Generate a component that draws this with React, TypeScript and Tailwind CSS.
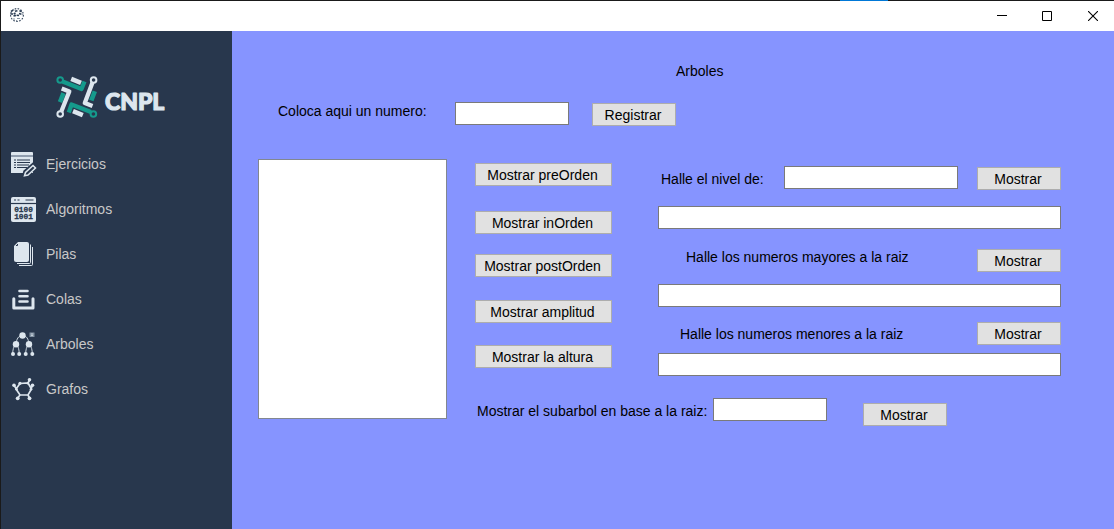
import React from 'react';

const LIGHT = '#dde6ee';
const NAVY = '#28374d';
const TEAL = '#159a8c';

function AppIcon() {
  return (
    <svg width="16" height="16" viewBox="0 0 16 16" fill="none" aria-hidden="true">
      <circle cx="8" cy="8" r="6.4" stroke="#35475c" strokeWidth="1.1" strokeDasharray="1.6 1.4" />
      <path d="M2 4.500 5 2.500M1.500 7h3l2-1M4.500 9l3-.8 3 .4M10.500 3.500l2.500 1.500M10 6.500l3.500 1M6 4.300l2.500-.6" stroke="#2c3e55" strokeWidth="1.600" strokeDasharray="2.500 .7" />
      <path d="M4 12h2M8 11.500h3M7 13.500h1" stroke="#8a97a5" />
    </svg>
  );
}

function Logo() {
  return (
    <svg className="ml-[54px]" width="112" height="46" viewBox="0 0 112 46" role="img" aria-label="CNPL">
      <g fill="none" strokeWidth="4.300" strokeLinejoin="round">
        <g stroke={TEAL}>
          <path d="M7.500 7.500 26.500 15 29.500 7.500" />
          <circle cx="5.200" cy="6" r="2.800" strokeWidth="2" />
          <path d="M8.500 19.200 5 28.200" strokeWidth="4.600" />
          <path d="M36 38 16.500 30.500 13.800 38.500" />
          <circle cx="38.400" cy="40" r="2.800" strokeWidth="2" />
          <path d="M39.800 17.200 36.300 26.500" strokeWidth="4.600" />
        </g>
        <g stroke={LIGHT}>
          <path d="M37.500 8.500 29.800 29 37.500 32" />
          <circle cx="38.600" cy="6" r="2.800" strokeWidth="2" />
          <path d="M16.200 4.800 26 8.800" strokeWidth="4.600" />
          <path d="M6.300 37.500 14.300 17.500 6.700 14.500" />
          <circle cx="5.200" cy="40" r="2.800" strokeWidth="2" />
          <path d="M18 37.200 27.800 41.200" strokeWidth="4.600" />
        </g>
      </g>
      <text x="50" y="36" fill={LIGHT} stroke={LIGHT} strokeWidth="1.200" strokeLinejoin="round" fontFamily="Lato, sans-serif" fontWeight="900" fontSize="23">CNPL</text>
    </svg>
  );
}

function EjerciciosIcon() {
  return (
    <svg width="26" height="26" viewBox="0 0 26 26" aria-hidden="true">
      <path fill={LIGHT} d="M1 1h20a1 1 0 0 1 1 1v20H0V2a1 1 0 0 1 1-1Z" />
      <path stroke="#8795a6" strokeWidth="1.800" d="M0 5h22" />
      <path stroke={NAVY} strokeWidth="1.100" d="M3 9h2M6 9h13M3 11.500h2M6 11.500h13M3 14h2M6 14h12M3 16.500h2M6 16.500h10" />
      <path fill={LIGHT} stroke={NAVY} strokeWidth="2.600" d="m12.500 25 1-4.500 8.500-7.500 3 3-8.500 8Z" />
      <path fill={NAVY} stroke={LIGHT} strokeWidth="1.500" d="m13.500 24.800 1-3.300 7.500-7 2.500 2.500-7.500 7Z" />
    </svg>
  );
}

function AlgoritmosIcon() {
  return (
    <svg width="26" height="26" viewBox="0 0 26 26" aria-hidden="true">
      <rect width="25" height="25" y="1" rx="2" fill={LIGHT} />
      <path stroke={NAVY} strokeWidth="1.200" d="M3 4h2M6.500 4h2M14.500 4h8" />
      <path stroke={NAVY} strokeWidth="1.200" d="M0 7.500h25" />
      <g fill={NAVY} stroke={NAVY} strokeWidth=".3" fontFamily="'Liberation Mono', monospace" fontWeight="700" fontSize="7.800">
        <text x="3.200" y="16.300">0100</text>
        <text x="3.200" y="23">1001</text>
      </g>
    </svg>
  );
}

function PilasIcon() {
  return (
    <svg width="26" height="26" viewBox="0 0 26 26" fill={LIGHT} aria-hidden="true">
      <path fill="none" stroke={LIGHT} d="M21.500 6v17.500a1 1 0 0 1-1 1H8M19.500 3.500V21.500a1 1 0 0 1-1 1H6" />
      <path d="M7 1h9a2 2 0 0 1 2 2v16a2 2 0 0 1-2 2H5a2 2 0 0 1-2-2V5Z" />
      <path d="M5 4.500h1.500V3" fill="none" stroke={NAVY} strokeWidth="1" />
    </svg>
  );
}

function ColasIcon() {
  return (
    <svg width="26" height="26" viewBox="0 0 26 26" fill="none" stroke={LIGHT} aria-hidden="true">
      <path strokeWidth="2.600" strokeLinecap="round" d="M8.500 5h8M8.500 10.200h8M8.500 15.500h8" />
      <path strokeWidth="3" strokeLinejoin="round" strokeLinecap="round" d="M2.800 12.800V22H22v-9.200" />
    </svg>
  );
}

function ArbolesIcon() {
  return (
    <svg width="26" height="26" viewBox="0 0 26 26" fill={LIGHT} aria-hidden="true">
      <path fill="none" stroke={LIGHT} strokeWidth=".9" d="M11.500 4.500C7.500 4.500 5.500 8 5 13M11.500 4.500c4 0 6 3.500 6.500 8.500M5 13.500C2.500 15 1.700 19 1.700 23M5 13.500c2.500 1.500 3.200 5.500 3.200 9.500M18 13.500c-2.500 1.500-3.300 5.500-3.300 9.500M18 13.500c2.500 1.500 3.300 5.500 3.300 9.500" />
      <circle cx="11.500" cy="4.500" r="3.200" />
      <circle cx="5" cy="13.300" r="3.200" />
      <circle cx="18" cy="13.300" r="3.200" />
      <circle cx="2" cy="23" r="2" />
      <circle cx="8.200" cy="23" r="2" />
      <circle cx="14.700" cy="23" r="2" />
      <circle cx="21.300" cy="23" r="2" />
      <path fill="#8292a3" d="M18.500 1.500h5v4.500h-5Z" />
      <path stroke="#c2ccd6" d="M20 3h2M20 4.500h2" />
    </svg>
  );
}

function GrafosIcon() {
  return (
    <svg width="26" height="26" viewBox="0 0 26 26" aria-hidden="true">
      <path fill="none" stroke={LIGHT} strokeWidth="1.700" d="M9 7.500 17 7l3.500 6L17 19H9l-4-6ZM17 7l1.500-3M20 12.500l1.500-3M17 19l1.500 3M9 19l-2.300 3M5.500 13 3 9.500" />
      <g fill={LIGHT}>
        <circle cx="18.500" cy="3.800" r="1.800" />
        <circle cx="9" cy="7.300" r="1.600" />
        <circle cx="16.800" cy="7.300" r="1.200" />
        <circle cx="3" cy="9.200" r="1.800" />
        <circle cx="21.500" cy="9.200" r="1.800" />
        <circle cx="5.500" cy="13.300" r="1.300" />
        <circle cx="20" cy="13.300" r="1.300" />
        <circle cx="6.700" cy="22.300" r="1.900" />
        <circle cx="18.500" cy="22.300" r="1.900" />
      </g>
    </svg>
  );
}

const menu = [
  { name: 'Ejercicios', Icon: EjerciciosIcon },
  { name: 'Algoritmos', Icon: AlgoritmosIcon },
  { name: 'Pilas', Icon: PilasIcon },
  { name: 'Colas', Icon: ColasIcon },
  { name: 'Arboles', Icon: ArbolesIcon },
  { name: 'Grafos', Icon: GrafosIcon },
];

function Button({ children, className = '' }: { children: React.ReactNode; className?: string }) {
  return (
    <button type="button" className={`h-[23px] shrink-0 border border-[#adadad] bg-[#e1e1e1] pr-0.5 text-center leading-[22px] whitespace-nowrap ${className}`}>
      {children}
    </button>
  );
}

function Field({ className = '', ...rest }: React.InputHTMLAttributes<HTMLInputElement>) {
  return <input type="text" className={`h-[23px] min-w-0 border border-[#7a7a7a] bg-white px-1 outline-none ${className}`} {...rest} />;
}

function TitleBar() {
  return (
    <header className="flex h-[31px] items-center border-t border-[#1a1a1a] bg-white">
      <span className="ml-2 pb-0.5"><AppIcon /></span>
      <div className="ml-auto flex h-full">
        <button type="button" aria-label="Minimizar" className="flex w-10 items-center justify-center">
          <svg width="10" height="10"><path d="M0 4.500h10" stroke="#000" /></svg>
        </button>
        <button type="button" aria-label="Maximizar" className="flex w-[50px] items-center justify-center">
          <svg width="10" height="10"><path d="M.5 .5h9v9h-9Z" fill="none" stroke="#000" /></svg>
        </button>
        <button type="button" aria-label="Cerrar" className="flex w-[42px] items-center justify-center">
          <svg width="10" height="10"><path d="m0 0 10 10M10 0 0 10" stroke="#000" strokeWidth="1.100" /></svg>
        </button>
      </div>
    </header>
  );
}

export default function App() {
  return (
    <div className="relative flex min-h-screen flex-col border-l border-[#1a1a1a] font-['Liberation_Sans',Arial,sans-serif] text-sm text-black">
      <TitleBar />
      <div className="absolute top-0 right-[226px] h-px w-12 bg-[#0078d7]" />
      <div className="flex flex-1">
        <aside className="w-[231px] shrink-0 bg-[#28374d] pt-[43px]">
          <Logo />
          <nav className="mt-[21px] flex flex-col">
            {menu.map(({ name, Icon }) => (
              <a key={name} href="#" className="flex h-[45px] items-center gap-[9px] pl-[10px] text-[#c8c8c8]">
                <Icon />
                {name}
              </a>
            ))}
          </nav>
        </aside>
        <main className="min-w-0 flex-1 bg-[#8694ff] pt-[30px] pr-[53px] pl-[26px]">
          <h1 className="pl-[418px] leading-5">Arboles</h1>
          <form className="mt-[21px] flex items-start pl-5">
            <label htmlFor="numero" className="w-[177px] leading-[18px]">Coloca aqui un numero:</label>
            <Field id="numero" className="w-[114px]" />
            <Button className="mt-px ml-[23px] w-[84px]">Registrar</Button>
          </form>
          <div className="mt-[33px] flex items-start gap-[28px]">
            <textarea aria-label="Resultado" className="h-[260px] w-[189px] shrink-0 resize-none border border-[#828790] bg-white p-1 outline-none" />
            <div className="flex min-w-0 flex-1 flex-col">
              <div className="flex gap-[46px]">
                <div className="flex w-[137px] shrink-0 flex-col pt-1">
                  <Button>Mostrar preOrden</Button>
                  <Button className="mt-[25px]">Mostrar inOrden</Button>
                  <Button className="mt-5">Mostrar postOrden</Button>
                  <Button className="mt-[23px]">Mostrar amplitud</Button>
                  <Button className="mt-[22px]">Mostrar la altura</Button>
                </div>
                <div className="flex min-w-0 flex-1 flex-col pt-[7px]">
                  <div className="flex items-start">
                    <label htmlFor="nivel" className="w-[126px] shrink-0 pt-1 pl-[3px] leading-[18px]">Halle el nivel de:</label>
                    <Field id="nivel" className="flex-1" />
                    <Button className="mt-px ml-[19px] w-[84px]">Mostrar</Button>
                  </div>
                  <Field aria-label="Nivel" className="mt-4" />
                  <div className="mt-5 flex items-start justify-between pl-7">
                    <label htmlFor="mayores" className="leading-4">Halle los numeros mayores a la raiz</label>
                    <Button className="w-[84px]">Mostrar</Button>
                  </div>
                  <Field id="mayores" className="mt-3" />
                  <div className="mt-[15px] flex items-start justify-between pl-[22px]">
                    <label htmlFor="menores" className="pt-1 leading-4">Halle los numeros menores a la raiz</label>
                    <Button className="w-[84px]">Mostrar</Button>
                  </div>
                  <Field id="menores" className="mt-2" />
                </div>
              </div>
              <form className="mt-[22px] flex items-start">
                <label htmlFor="subarbol" className="w-[238px] shrink-0 pt-1 pl-0.5 leading-[18px] whitespace-nowrap">Mostrar el subarbol en base a la raiz:</label>
                <Field id="subarbol" className="w-[114px]" />
                <Button className="mt-[5px] ml-9 w-[84px]">Mostrar</Button>
              </form>
            </div>
          </div>
        </main>
      </div>
    </div>
  );
}
